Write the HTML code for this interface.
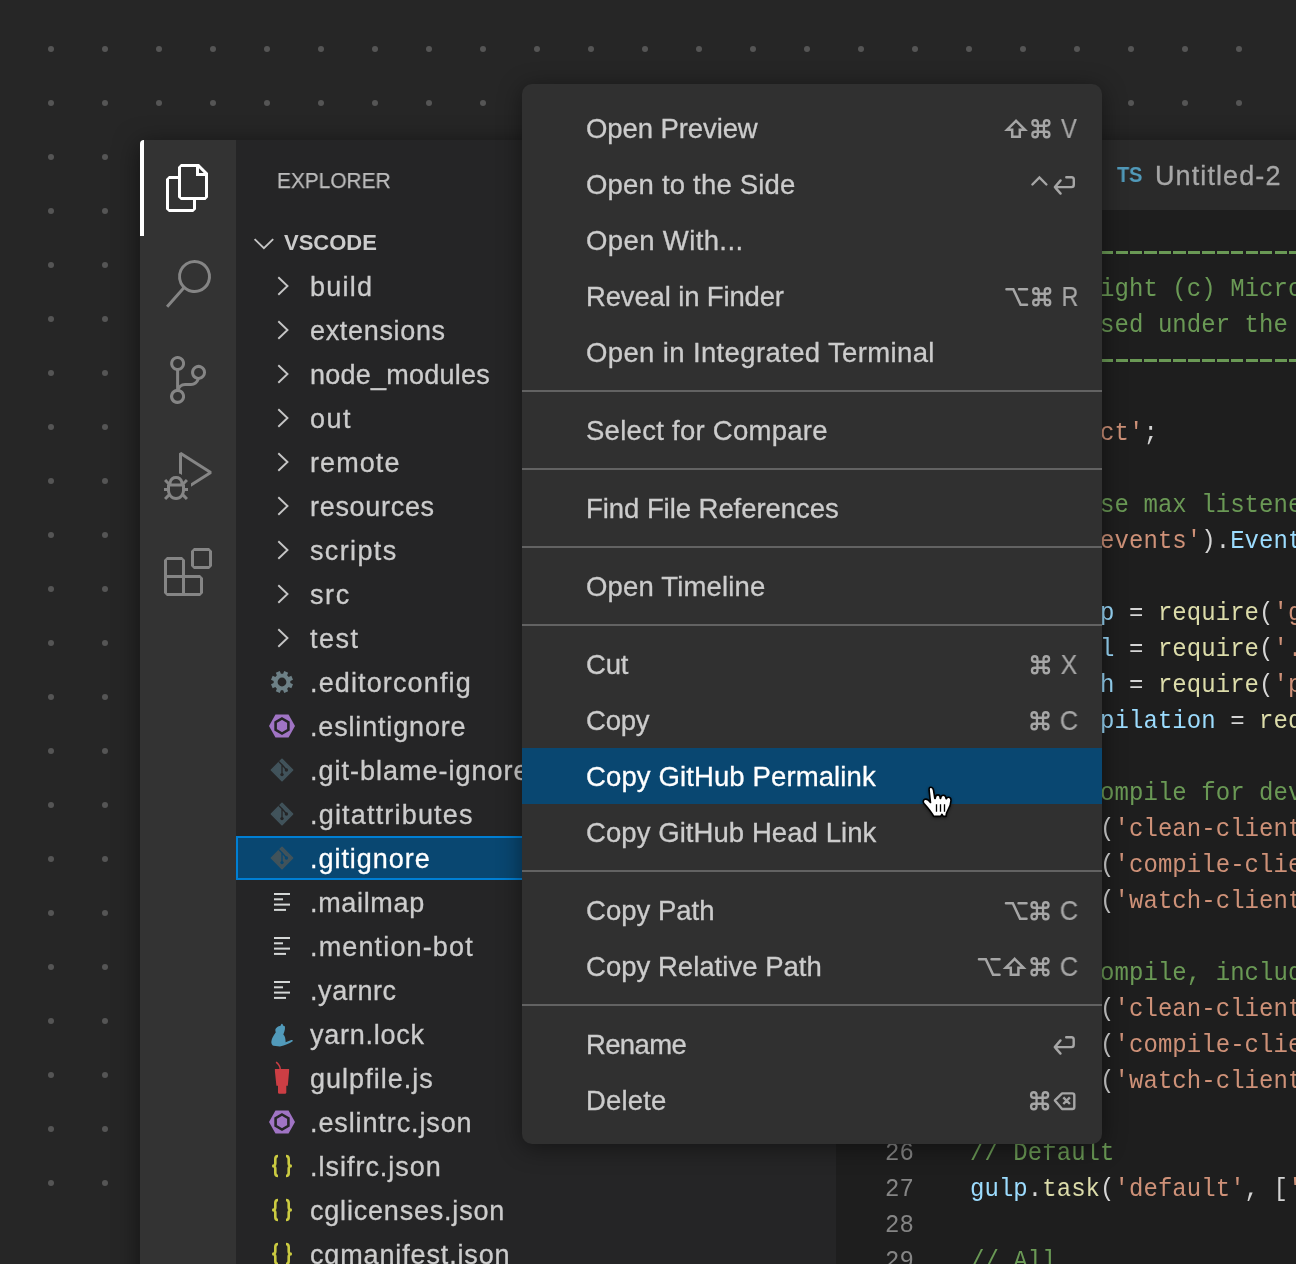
<!DOCTYPE html><html><head><meta charset="utf-8"><style>
*{margin:0;padding:0;box-sizing:border-box}
html,body{width:1296px;height:1264px;overflow:hidden;background:#262626}
body{position:relative;font-family:"Liberation Sans",sans-serif;}
.a{position:absolute}
.t{position:absolute;white-space:pre;line-height:1;will-change:transform}
.m{font-family:"Liberation Mono",monospace}
svg{position:absolute;overflow:visible}
.ex{font-size:27px;-webkit-text-stroke:0.3px currentColor}
.mi{font-size:27.5px;-webkit-text-stroke:0.3px currentColor}
.cl{font-size:24px;line-height:36px;letter-spacing:0.05px;transform-origin:0 24.4px;transform:scaleY(1.09)}
</style></head><body><svg class="a" style="left:0;top:0" width="1296" height="1264" fill="#555555"><circle cx="51" cy="49" r="3"/><circle cx="105" cy="49" r="3"/><circle cx="159" cy="49" r="3"/><circle cx="213" cy="49" r="3"/><circle cx="267" cy="49" r="3"/><circle cx="321" cy="49" r="3"/><circle cx="375" cy="49" r="3"/><circle cx="429" cy="49" r="3"/><circle cx="483" cy="49" r="3"/><circle cx="537" cy="49" r="3"/><circle cx="591" cy="49" r="3"/><circle cx="645" cy="49" r="3"/><circle cx="699" cy="49" r="3"/><circle cx="753" cy="49" r="3"/><circle cx="807" cy="49" r="3"/><circle cx="861" cy="49" r="3"/><circle cx="915" cy="49" r="3"/><circle cx="969" cy="49" r="3"/><circle cx="1023" cy="49" r="3"/><circle cx="1077" cy="49" r="3"/><circle cx="1131" cy="49" r="3"/><circle cx="1185" cy="49" r="3"/><circle cx="1239" cy="49" r="3"/><circle cx="51" cy="103" r="3"/><circle cx="105" cy="103" r="3"/><circle cx="159" cy="103" r="3"/><circle cx="213" cy="103" r="3"/><circle cx="267" cy="103" r="3"/><circle cx="321" cy="103" r="3"/><circle cx="375" cy="103" r="3"/><circle cx="429" cy="103" r="3"/><circle cx="483" cy="103" r="3"/><circle cx="537" cy="103" r="3"/><circle cx="591" cy="103" r="3"/><circle cx="645" cy="103" r="3"/><circle cx="699" cy="103" r="3"/><circle cx="753" cy="103" r="3"/><circle cx="807" cy="103" r="3"/><circle cx="861" cy="103" r="3"/><circle cx="915" cy="103" r="3"/><circle cx="969" cy="103" r="3"/><circle cx="1023" cy="103" r="3"/><circle cx="1077" cy="103" r="3"/><circle cx="1131" cy="103" r="3"/><circle cx="1185" cy="103" r="3"/><circle cx="1239" cy="103" r="3"/><circle cx="51" cy="157" r="3"/><circle cx="105" cy="157" r="3"/><circle cx="159" cy="157" r="3"/><circle cx="213" cy="157" r="3"/><circle cx="267" cy="157" r="3"/><circle cx="321" cy="157" r="3"/><circle cx="375" cy="157" r="3"/><circle cx="429" cy="157" r="3"/><circle cx="483" cy="157" r="3"/><circle cx="537" cy="157" r="3"/><circle cx="591" cy="157" r="3"/><circle cx="645" cy="157" r="3"/><circle cx="699" cy="157" r="3"/><circle cx="753" cy="157" r="3"/><circle cx="807" cy="157" r="3"/><circle cx="861" cy="157" r="3"/><circle cx="915" cy="157" r="3"/><circle cx="969" cy="157" r="3"/><circle cx="1023" cy="157" r="3"/><circle cx="1077" cy="157" r="3"/><circle cx="1131" cy="157" r="3"/><circle cx="1185" cy="157" r="3"/><circle cx="1239" cy="157" r="3"/><circle cx="51" cy="211" r="3"/><circle cx="105" cy="211" r="3"/><circle cx="159" cy="211" r="3"/><circle cx="213" cy="211" r="3"/><circle cx="267" cy="211" r="3"/><circle cx="321" cy="211" r="3"/><circle cx="375" cy="211" r="3"/><circle cx="429" cy="211" r="3"/><circle cx="483" cy="211" r="3"/><circle cx="537" cy="211" r="3"/><circle cx="591" cy="211" r="3"/><circle cx="645" cy="211" r="3"/><circle cx="699" cy="211" r="3"/><circle cx="753" cy="211" r="3"/><circle cx="807" cy="211" r="3"/><circle cx="861" cy="211" r="3"/><circle cx="915" cy="211" r="3"/><circle cx="969" cy="211" r="3"/><circle cx="1023" cy="211" r="3"/><circle cx="1077" cy="211" r="3"/><circle cx="1131" cy="211" r="3"/><circle cx="1185" cy="211" r="3"/><circle cx="1239" cy="211" r="3"/><circle cx="51" cy="265" r="3"/><circle cx="105" cy="265" r="3"/><circle cx="159" cy="265" r="3"/><circle cx="213" cy="265" r="3"/><circle cx="267" cy="265" r="3"/><circle cx="321" cy="265" r="3"/><circle cx="375" cy="265" r="3"/><circle cx="429" cy="265" r="3"/><circle cx="483" cy="265" r="3"/><circle cx="537" cy="265" r="3"/><circle cx="591" cy="265" r="3"/><circle cx="645" cy="265" r="3"/><circle cx="699" cy="265" r="3"/><circle cx="753" cy="265" r="3"/><circle cx="807" cy="265" r="3"/><circle cx="861" cy="265" r="3"/><circle cx="915" cy="265" r="3"/><circle cx="969" cy="265" r="3"/><circle cx="1023" cy="265" r="3"/><circle cx="1077" cy="265" r="3"/><circle cx="1131" cy="265" r="3"/><circle cx="1185" cy="265" r="3"/><circle cx="1239" cy="265" r="3"/><circle cx="51" cy="319" r="3"/><circle cx="105" cy="319" r="3"/><circle cx="159" cy="319" r="3"/><circle cx="213" cy="319" r="3"/><circle cx="267" cy="319" r="3"/><circle cx="321" cy="319" r="3"/><circle cx="375" cy="319" r="3"/><circle cx="429" cy="319" r="3"/><circle cx="483" cy="319" r="3"/><circle cx="537" cy="319" r="3"/><circle cx="591" cy="319" r="3"/><circle cx="645" cy="319" r="3"/><circle cx="699" cy="319" r="3"/><circle cx="753" cy="319" r="3"/><circle cx="807" cy="319" r="3"/><circle cx="861" cy="319" r="3"/><circle cx="915" cy="319" r="3"/><circle cx="969" cy="319" r="3"/><circle cx="1023" cy="319" r="3"/><circle cx="1077" cy="319" r="3"/><circle cx="1131" cy="319" r="3"/><circle cx="1185" cy="319" r="3"/><circle cx="1239" cy="319" r="3"/><circle cx="51" cy="373" r="3"/><circle cx="105" cy="373" r="3"/><circle cx="159" cy="373" r="3"/><circle cx="213" cy="373" r="3"/><circle cx="267" cy="373" r="3"/><circle cx="321" cy="373" r="3"/><circle cx="375" cy="373" r="3"/><circle cx="429" cy="373" r="3"/><circle cx="483" cy="373" r="3"/><circle cx="537" cy="373" r="3"/><circle cx="591" cy="373" r="3"/><circle cx="645" cy="373" r="3"/><circle cx="699" cy="373" r="3"/><circle cx="753" cy="373" r="3"/><circle cx="807" cy="373" r="3"/><circle cx="861" cy="373" r="3"/><circle cx="915" cy="373" r="3"/><circle cx="969" cy="373" r="3"/><circle cx="1023" cy="373" r="3"/><circle cx="1077" cy="373" r="3"/><circle cx="1131" cy="373" r="3"/><circle cx="1185" cy="373" r="3"/><circle cx="1239" cy="373" r="3"/><circle cx="51" cy="427" r="3"/><circle cx="105" cy="427" r="3"/><circle cx="159" cy="427" r="3"/><circle cx="213" cy="427" r="3"/><circle cx="267" cy="427" r="3"/><circle cx="321" cy="427" r="3"/><circle cx="375" cy="427" r="3"/><circle cx="429" cy="427" r="3"/><circle cx="483" cy="427" r="3"/><circle cx="537" cy="427" r="3"/><circle cx="591" cy="427" r="3"/><circle cx="645" cy="427" r="3"/><circle cx="699" cy="427" r="3"/><circle cx="753" cy="427" r="3"/><circle cx="807" cy="427" r="3"/><circle cx="861" cy="427" r="3"/><circle cx="915" cy="427" r="3"/><circle cx="969" cy="427" r="3"/><circle cx="1023" cy="427" r="3"/><circle cx="1077" cy="427" r="3"/><circle cx="1131" cy="427" r="3"/><circle cx="1185" cy="427" r="3"/><circle cx="1239" cy="427" r="3"/><circle cx="51" cy="481" r="3"/><circle cx="105" cy="481" r="3"/><circle cx="159" cy="481" r="3"/><circle cx="213" cy="481" r="3"/><circle cx="267" cy="481" r="3"/><circle cx="321" cy="481" r="3"/><circle cx="375" cy="481" r="3"/><circle cx="429" cy="481" r="3"/><circle cx="483" cy="481" r="3"/><circle cx="537" cy="481" r="3"/><circle cx="591" cy="481" r="3"/><circle cx="645" cy="481" r="3"/><circle cx="699" cy="481" r="3"/><circle cx="753" cy="481" r="3"/><circle cx="807" cy="481" r="3"/><circle cx="861" cy="481" r="3"/><circle cx="915" cy="481" r="3"/><circle cx="969" cy="481" r="3"/><circle cx="1023" cy="481" r="3"/><circle cx="1077" cy="481" r="3"/><circle cx="1131" cy="481" r="3"/><circle cx="1185" cy="481" r="3"/><circle cx="1239" cy="481" r="3"/><circle cx="51" cy="535" r="3"/><circle cx="105" cy="535" r="3"/><circle cx="159" cy="535" r="3"/><circle cx="213" cy="535" r="3"/><circle cx="267" cy="535" r="3"/><circle cx="321" cy="535" r="3"/><circle cx="375" cy="535" r="3"/><circle cx="429" cy="535" r="3"/><circle cx="483" cy="535" r="3"/><circle cx="537" cy="535" r="3"/><circle cx="591" cy="535" r="3"/><circle cx="645" cy="535" r="3"/><circle cx="699" cy="535" r="3"/><circle cx="753" cy="535" r="3"/><circle cx="807" cy="535" r="3"/><circle cx="861" cy="535" r="3"/><circle cx="915" cy="535" r="3"/><circle cx="969" cy="535" r="3"/><circle cx="1023" cy="535" r="3"/><circle cx="1077" cy="535" r="3"/><circle cx="1131" cy="535" r="3"/><circle cx="1185" cy="535" r="3"/><circle cx="1239" cy="535" r="3"/><circle cx="51" cy="589" r="3"/><circle cx="105" cy="589" r="3"/><circle cx="159" cy="589" r="3"/><circle cx="213" cy="589" r="3"/><circle cx="267" cy="589" r="3"/><circle cx="321" cy="589" r="3"/><circle cx="375" cy="589" r="3"/><circle cx="429" cy="589" r="3"/><circle cx="483" cy="589" r="3"/><circle cx="537" cy="589" r="3"/><circle cx="591" cy="589" r="3"/><circle cx="645" cy="589" r="3"/><circle cx="699" cy="589" r="3"/><circle cx="753" cy="589" r="3"/><circle cx="807" cy="589" r="3"/><circle cx="861" cy="589" r="3"/><circle cx="915" cy="589" r="3"/><circle cx="969" cy="589" r="3"/><circle cx="1023" cy="589" r="3"/><circle cx="1077" cy="589" r="3"/><circle cx="1131" cy="589" r="3"/><circle cx="1185" cy="589" r="3"/><circle cx="1239" cy="589" r="3"/><circle cx="51" cy="643" r="3"/><circle cx="105" cy="643" r="3"/><circle cx="159" cy="643" r="3"/><circle cx="213" cy="643" r="3"/><circle cx="267" cy="643" r="3"/><circle cx="321" cy="643" r="3"/><circle cx="375" cy="643" r="3"/><circle cx="429" cy="643" r="3"/><circle cx="483" cy="643" r="3"/><circle cx="537" cy="643" r="3"/><circle cx="591" cy="643" r="3"/><circle cx="645" cy="643" r="3"/><circle cx="699" cy="643" r="3"/><circle cx="753" cy="643" r="3"/><circle cx="807" cy="643" r="3"/><circle cx="861" cy="643" r="3"/><circle cx="915" cy="643" r="3"/><circle cx="969" cy="643" r="3"/><circle cx="1023" cy="643" r="3"/><circle cx="1077" cy="643" r="3"/><circle cx="1131" cy="643" r="3"/><circle cx="1185" cy="643" r="3"/><circle cx="1239" cy="643" r="3"/><circle cx="51" cy="697" r="3"/><circle cx="105" cy="697" r="3"/><circle cx="159" cy="697" r="3"/><circle cx="213" cy="697" r="3"/><circle cx="267" cy="697" r="3"/><circle cx="321" cy="697" r="3"/><circle cx="375" cy="697" r="3"/><circle cx="429" cy="697" r="3"/><circle cx="483" cy="697" r="3"/><circle cx="537" cy="697" r="3"/><circle cx="591" cy="697" r="3"/><circle cx="645" cy="697" r="3"/><circle cx="699" cy="697" r="3"/><circle cx="753" cy="697" r="3"/><circle cx="807" cy="697" r="3"/><circle cx="861" cy="697" r="3"/><circle cx="915" cy="697" r="3"/><circle cx="969" cy="697" r="3"/><circle cx="1023" cy="697" r="3"/><circle cx="1077" cy="697" r="3"/><circle cx="1131" cy="697" r="3"/><circle cx="1185" cy="697" r="3"/><circle cx="1239" cy="697" r="3"/><circle cx="51" cy="751" r="3"/><circle cx="105" cy="751" r="3"/><circle cx="159" cy="751" r="3"/><circle cx="213" cy="751" r="3"/><circle cx="267" cy="751" r="3"/><circle cx="321" cy="751" r="3"/><circle cx="375" cy="751" r="3"/><circle cx="429" cy="751" r="3"/><circle cx="483" cy="751" r="3"/><circle cx="537" cy="751" r="3"/><circle cx="591" cy="751" r="3"/><circle cx="645" cy="751" r="3"/><circle cx="699" cy="751" r="3"/><circle cx="753" cy="751" r="3"/><circle cx="807" cy="751" r="3"/><circle cx="861" cy="751" r="3"/><circle cx="915" cy="751" r="3"/><circle cx="969" cy="751" r="3"/><circle cx="1023" cy="751" r="3"/><circle cx="1077" cy="751" r="3"/><circle cx="1131" cy="751" r="3"/><circle cx="1185" cy="751" r="3"/><circle cx="1239" cy="751" r="3"/><circle cx="51" cy="805" r="3"/><circle cx="105" cy="805" r="3"/><circle cx="159" cy="805" r="3"/><circle cx="213" cy="805" r="3"/><circle cx="267" cy="805" r="3"/><circle cx="321" cy="805" r="3"/><circle cx="375" cy="805" r="3"/><circle cx="429" cy="805" r="3"/><circle cx="483" cy="805" r="3"/><circle cx="537" cy="805" r="3"/><circle cx="591" cy="805" r="3"/><circle cx="645" cy="805" r="3"/><circle cx="699" cy="805" r="3"/><circle cx="753" cy="805" r="3"/><circle cx="807" cy="805" r="3"/><circle cx="861" cy="805" r="3"/><circle cx="915" cy="805" r="3"/><circle cx="969" cy="805" r="3"/><circle cx="1023" cy="805" r="3"/><circle cx="1077" cy="805" r="3"/><circle cx="1131" cy="805" r="3"/><circle cx="1185" cy="805" r="3"/><circle cx="1239" cy="805" r="3"/><circle cx="51" cy="859" r="3"/><circle cx="105" cy="859" r="3"/><circle cx="159" cy="859" r="3"/><circle cx="213" cy="859" r="3"/><circle cx="267" cy="859" r="3"/><circle cx="321" cy="859" r="3"/><circle cx="375" cy="859" r="3"/><circle cx="429" cy="859" r="3"/><circle cx="483" cy="859" r="3"/><circle cx="537" cy="859" r="3"/><circle cx="591" cy="859" r="3"/><circle cx="645" cy="859" r="3"/><circle cx="699" cy="859" r="3"/><circle cx="753" cy="859" r="3"/><circle cx="807" cy="859" r="3"/><circle cx="861" cy="859" r="3"/><circle cx="915" cy="859" r="3"/><circle cx="969" cy="859" r="3"/><circle cx="1023" cy="859" r="3"/><circle cx="1077" cy="859" r="3"/><circle cx="1131" cy="859" r="3"/><circle cx="1185" cy="859" r="3"/><circle cx="1239" cy="859" r="3"/><circle cx="51" cy="913" r="3"/><circle cx="105" cy="913" r="3"/><circle cx="159" cy="913" r="3"/><circle cx="213" cy="913" r="3"/><circle cx="267" cy="913" r="3"/><circle cx="321" cy="913" r="3"/><circle cx="375" cy="913" r="3"/><circle cx="429" cy="913" r="3"/><circle cx="483" cy="913" r="3"/><circle cx="537" cy="913" r="3"/><circle cx="591" cy="913" r="3"/><circle cx="645" cy="913" r="3"/><circle cx="699" cy="913" r="3"/><circle cx="753" cy="913" r="3"/><circle cx="807" cy="913" r="3"/><circle cx="861" cy="913" r="3"/><circle cx="915" cy="913" r="3"/><circle cx="969" cy="913" r="3"/><circle cx="1023" cy="913" r="3"/><circle cx="1077" cy="913" r="3"/><circle cx="1131" cy="913" r="3"/><circle cx="1185" cy="913" r="3"/><circle cx="1239" cy="913" r="3"/><circle cx="51" cy="967" r="3"/><circle cx="105" cy="967" r="3"/><circle cx="159" cy="967" r="3"/><circle cx="213" cy="967" r="3"/><circle cx="267" cy="967" r="3"/><circle cx="321" cy="967" r="3"/><circle cx="375" cy="967" r="3"/><circle cx="429" cy="967" r="3"/><circle cx="483" cy="967" r="3"/><circle cx="537" cy="967" r="3"/><circle cx="591" cy="967" r="3"/><circle cx="645" cy="967" r="3"/><circle cx="699" cy="967" r="3"/><circle cx="753" cy="967" r="3"/><circle cx="807" cy="967" r="3"/><circle cx="861" cy="967" r="3"/><circle cx="915" cy="967" r="3"/><circle cx="969" cy="967" r="3"/><circle cx="1023" cy="967" r="3"/><circle cx="1077" cy="967" r="3"/><circle cx="1131" cy="967" r="3"/><circle cx="1185" cy="967" r="3"/><circle cx="1239" cy="967" r="3"/><circle cx="51" cy="1021" r="3"/><circle cx="105" cy="1021" r="3"/><circle cx="159" cy="1021" r="3"/><circle cx="213" cy="1021" r="3"/><circle cx="267" cy="1021" r="3"/><circle cx="321" cy="1021" r="3"/><circle cx="375" cy="1021" r="3"/><circle cx="429" cy="1021" r="3"/><circle cx="483" cy="1021" r="3"/><circle cx="537" cy="1021" r="3"/><circle cx="591" cy="1021" r="3"/><circle cx="645" cy="1021" r="3"/><circle cx="699" cy="1021" r="3"/><circle cx="753" cy="1021" r="3"/><circle cx="807" cy="1021" r="3"/><circle cx="861" cy="1021" r="3"/><circle cx="915" cy="1021" r="3"/><circle cx="969" cy="1021" r="3"/><circle cx="1023" cy="1021" r="3"/><circle cx="1077" cy="1021" r="3"/><circle cx="1131" cy="1021" r="3"/><circle cx="1185" cy="1021" r="3"/><circle cx="1239" cy="1021" r="3"/><circle cx="51" cy="1075" r="3"/><circle cx="105" cy="1075" r="3"/><circle cx="159" cy="1075" r="3"/><circle cx="213" cy="1075" r="3"/><circle cx="267" cy="1075" r="3"/><circle cx="321" cy="1075" r="3"/><circle cx="375" cy="1075" r="3"/><circle cx="429" cy="1075" r="3"/><circle cx="483" cy="1075" r="3"/><circle cx="537" cy="1075" r="3"/><circle cx="591" cy="1075" r="3"/><circle cx="645" cy="1075" r="3"/><circle cx="699" cy="1075" r="3"/><circle cx="753" cy="1075" r="3"/><circle cx="807" cy="1075" r="3"/><circle cx="861" cy="1075" r="3"/><circle cx="915" cy="1075" r="3"/><circle cx="969" cy="1075" r="3"/><circle cx="1023" cy="1075" r="3"/><circle cx="1077" cy="1075" r="3"/><circle cx="1131" cy="1075" r="3"/><circle cx="1185" cy="1075" r="3"/><circle cx="1239" cy="1075" r="3"/><circle cx="51" cy="1129" r="3"/><circle cx="105" cy="1129" r="3"/><circle cx="159" cy="1129" r="3"/><circle cx="213" cy="1129" r="3"/><circle cx="267" cy="1129" r="3"/><circle cx="321" cy="1129" r="3"/><circle cx="375" cy="1129" r="3"/><circle cx="429" cy="1129" r="3"/><circle cx="483" cy="1129" r="3"/><circle cx="537" cy="1129" r="3"/><circle cx="591" cy="1129" r="3"/><circle cx="645" cy="1129" r="3"/><circle cx="699" cy="1129" r="3"/><circle cx="753" cy="1129" r="3"/><circle cx="807" cy="1129" r="3"/><circle cx="861" cy="1129" r="3"/><circle cx="915" cy="1129" r="3"/><circle cx="969" cy="1129" r="3"/><circle cx="1023" cy="1129" r="3"/><circle cx="1077" cy="1129" r="3"/><circle cx="1131" cy="1129" r="3"/><circle cx="1185" cy="1129" r="3"/><circle cx="1239" cy="1129" r="3"/><circle cx="51" cy="1183" r="3"/><circle cx="105" cy="1183" r="3"/><circle cx="159" cy="1183" r="3"/><circle cx="213" cy="1183" r="3"/><circle cx="267" cy="1183" r="3"/><circle cx="321" cy="1183" r="3"/><circle cx="375" cy="1183" r="3"/><circle cx="429" cy="1183" r="3"/><circle cx="483" cy="1183" r="3"/><circle cx="537" cy="1183" r="3"/><circle cx="591" cy="1183" r="3"/><circle cx="645" cy="1183" r="3"/><circle cx="699" cy="1183" r="3"/><circle cx="753" cy="1183" r="3"/><circle cx="807" cy="1183" r="3"/><circle cx="861" cy="1183" r="3"/><circle cx="915" cy="1183" r="3"/><circle cx="969" cy="1183" r="3"/><circle cx="1023" cy="1183" r="3"/><circle cx="1077" cy="1183" r="3"/><circle cx="1131" cy="1183" r="3"/><circle cx="1185" cy="1183" r="3"/><circle cx="1239" cy="1183" r="3"/></svg>
<div class="a" style="left:140px;top:140px;width:1200px;height:1200px;border-radius:4px;box-shadow:0 5px 24px 1px rgba(0,0,0,0.5);background:#1e1e1e;overflow:hidden">
<div class="a" style="left:0;top:0;width:96px;height:1200px;background:#333333"></div>
<div class="a" style="left:0;top:0;width:4px;height:96px;background:#ffffff"></div>
<div class="a" style="left:96px;top:0;width:600px;height:1200px;background:#252526"></div>
<div class="a" style="left:696px;top:0;width:600px;height:70px;background:#2a2a2a"></div>
</div>
<svg style="left:164px;top:164px" width="48" height="48" viewBox="0 0 24 24" fill="#ffffff"><path fill-rule="evenodd" clip-rule="evenodd" d="M17.5 0h-9L7 1.5V6H2.5L1 7.5v15.07L2.5 24h12.07L16 22.57V18h4.7l1.3-1.43V4.5L17.5 0zm0 2.12l2.38 2.38H17.5V2.12zm-3 20.38h-12v-15H7v9.07L8.5 18h6v4.5zm6-6h-12v-15H16V6h4.5v10.5z"/></svg>
<svg style="left:164px;top:260px" width="48" height="48" viewBox="0 0 24 24" fill="#858585"><path d="M15.25 0a8.25 8.25 0 0 0-6.18 13.72L1 22.88l1.12 1 8.05-9.12A8.251 8.251 0 1 0 15.25.01V0zm0 15a6.75 6.75 0 1 1 0-13.5 6.75 6.75 0 0 1 0 13.5z"/></svg>
<svg style="left:164px;top:356px" width="48" height="48" viewBox="0 0 24 24" fill="#858585"><path d="M21.007 8.222A3.738 3.738 0 0 0 15.045 5.2a3.737 3.737 0 0 0 1.156 6.583 2.988 2.988 0 0 1-2.668 1.67h-2.99a4.456 4.456 0 0 0-2.989 1.165V7.4a3.737 3.737 0 1 0-1.494 0v9.117a3.776 3.776 0 1 0 1.816.099 2.99 2.99 0 0 1 2.668-1.667h2.99a4.484 4.484 0 0 0 4.223-3.039 3.736 3.736 0 0 0 3.25-3.687zM4.565 3.738a2.242 2.242 0 1 1 4.484 0 2.242 2.242 0 0 1-4.484 0zm4.484 16.441a2.242 2.242 0 1 1-4.484 0 2.242 2.242 0 0 1 4.484 0zm8.221-9.715a2.242 2.242 0 1 1 0-4.485 2.242 2.242 0 0 1 0 4.485z"/></svg>
<svg style="left:164px;top:452px" width="48" height="48" viewBox="0 0 24 24" fill="#858585"><path d="M10.94 13.5l-1.32 1.32a3.73 3.73 0 0 0-7.24 0L1.06 13.5 0 14.56l1.72 1.72-.22.22V18H0v1.5h1.5v.08c.077.489.214.966.41 1.42L0 22.94 1.06 24l1.65-1.65A4.308 4.308 0 0 0 6 24a4.31 4.31 0 0 0 3.29-1.65L10.94 24 12 22.94 10.09 21c.198-.464.336-.951.41-1.45v-.1H12V18h-1.5v-1.5l-.22-.22L12 14.56l-1.06-1.06zM6 13.5a2.25 2.25 0 0 1 2.25 2.25h-4.5A2.25 2.25 0 0 1 6 13.5zm3 6a3.33 3.33 0 0 1-3 3 3.33 3.33 0 0 1-3-3v-2.25h6v2.25zm14.76-9.9v1.26L13.5 17.37V15.6l8.5-5.37L9 2v9.46a5.07 5.07 0 0 0-1.5-.72V.63L8.64 0l15.12 9.6z"/></svg>
<svg style="left:164px;top:548px" width="48" height="48" viewBox="0 0 24 24" fill="#858585"><path d="M13.5 1.5L15 0h7.5L24 1.5V9l-1.5 1.5H15L13.5 9V1.5zm1.5 0V9h7.5V1.5H15zM0 15V6l1.5-1.5H9L10.5 6v7.5H18l1.5 1.5v7.5L18 24H1.5L0 22.5V15zm9-1.5V6H1.5v7.5H9zM9 15H1.5v7.5H9V15zm1.5 7.5H18V15h-7.5v7.5z"/></svg>
<div class="t" style="left:277px;top:169.5px;font-size:22px;transform-origin:0 0;transform:scaleX(0.948);-webkit-text-stroke:0.25px #bbbbbb;color:#bbbbbb">EXPLORER</div>
<svg style="left:248px;top:228px" width="32" height="30" viewBox="0 0 32 30"><path d="M6.6 11.1 L15.9 20.2 L25.2 11.1" stroke="#c5c5c5" stroke-width="1.9" fill="none"/></svg>
<div class="t" style="left:284px;top:231.5px;font-size:22px;font-weight:bold;color:#cccccc">VSCODE</div>
<svg style="left:270px;top:274px" width="24" height="24" viewBox="0 0 24 24"><path d="M8.3 3.2 L17.5 12 L8.3 20.8" stroke="#c5c5c5" stroke-width="1.9" fill="none"/></svg>
<div class="t ex" style="left:309.7px;top:274px;color:#cccccc;letter-spacing:1.250px">build</div>
<svg style="left:270px;top:318px" width="24" height="24" viewBox="0 0 24 24"><path d="M8.3 3.2 L17.5 12 L8.3 20.8" stroke="#c5c5c5" stroke-width="1.9" fill="none"/></svg>
<div class="t ex" style="left:309.7px;top:318px;color:#cccccc;letter-spacing:0.667px">extensions</div>
<svg style="left:270px;top:362px" width="24" height="24" viewBox="0 0 24 24"><path d="M8.3 3.2 L17.5 12 L8.3 20.8" stroke="#c5c5c5" stroke-width="1.9" fill="none"/></svg>
<div class="t ex" style="left:309.7px;top:362px;color:#cccccc;letter-spacing:0.239px">node_modules</div>
<svg style="left:270px;top:406px" width="24" height="24" viewBox="0 0 24 24"><path d="M8.3 3.2 L17.5 12 L8.3 20.8" stroke="#c5c5c5" stroke-width="1.9" fill="none"/></svg>
<div class="t ex" style="left:309.7px;top:406px;color:#cccccc;letter-spacing:1.500px">out</div>
<svg style="left:270px;top:450px" width="24" height="24" viewBox="0 0 24 24"><path d="M8.3 3.2 L17.5 12 L8.3 20.8" stroke="#c5c5c5" stroke-width="1.9" fill="none"/></svg>
<div class="t ex" style="left:309.7px;top:450px;color:#cccccc;letter-spacing:1.080px">remote</div>
<svg style="left:270px;top:494px" width="24" height="24" viewBox="0 0 24 24"><path d="M8.3 3.2 L17.5 12 L8.3 20.8" stroke="#c5c5c5" stroke-width="1.9" fill="none"/></svg>
<div class="t ex" style="left:309.7px;top:494px;color:#cccccc;letter-spacing:0.696px">resources</div>
<svg style="left:270px;top:538px" width="24" height="24" viewBox="0 0 24 24"><path d="M8.3 3.2 L17.5 12 L8.3 20.8" stroke="#c5c5c5" stroke-width="1.9" fill="none"/></svg>
<div class="t ex" style="left:309.7px;top:538px;color:#cccccc;letter-spacing:1.369px">scripts</div>
<svg style="left:270px;top:582px" width="24" height="24" viewBox="0 0 24 24"><path d="M8.3 3.2 L17.5 12 L8.3 20.8" stroke="#c5c5c5" stroke-width="1.9" fill="none"/></svg>
<div class="t ex" style="left:309.7px;top:582px;color:#cccccc;letter-spacing:1.600px">src</div>
<svg style="left:270px;top:626px" width="24" height="24" viewBox="0 0 24 24"><path d="M8.3 3.2 L17.5 12 L8.3 20.8" stroke="#c5c5c5" stroke-width="1.9" fill="none"/></svg>
<div class="t ex" style="left:309.7px;top:626px;color:#cccccc;letter-spacing:1.466px">test</div>
<svg style="left:270px;top:670px" width="24" height="24" viewBox="0 0 24 24" fill="#6d8086"><path fill-rule="evenodd" d="M13.10 3.67 L14.23 1.02 L18.18 2.66 L17.11 5.34 L18.66 6.89 L21.34 5.82 L22.98 9.77 L20.33 10.90 L20.33 13.10 L22.98 14.23 L21.34 18.18 L18.66 17.11 L17.11 18.66 L18.18 21.34 L14.23 22.98 L13.10 20.33 L10.90 20.33 L9.77 22.98 L5.82 21.34 L6.89 18.66 L5.34 17.11 L2.66 18.18 L1.02 14.23 L3.67 13.10 L3.67 10.90 L1.02 9.77 L2.66 5.82 L5.34 6.89 L6.89 5.34 L5.82 2.66 L9.77 1.02 L10.90 3.67Z M12 7.6a4.4 4.4 0 1 0 0 8.8 4.4 4.4 0 0 0 0-8.8z"/></svg>
<div class="t ex" style="left:309.7px;top:670px;color:#cccccc;letter-spacing:1.135px">.editorconfig</div>
<svg style="left:268px;top:714px" width="28" height="24" viewBox="0 0 28 24"><path fill="#a074c4" d="M1 12 L7.5 0.6 H20.5 L27 12 L20.5 23.4 H7.5Z"/><path fill="none" stroke="#252526" stroke-width="2.6" d="M14 4.5 L20.4 8.25 V15.75 L14 19.5 L7.6 15.75 V8.25Z"/></svg>
<div class="t ex" style="left:309.7px;top:714px;color:#cccccc;letter-spacing:0.833px">.eslintignore</div>
<svg style="left:270px;top:758px" width="24" height="24" viewBox="0 0 24 24"><path fill="#41535b" stroke="#41535b" stroke-width="1.6" stroke-linejoin="round" d="M12 1.4 L22.6 12 L12 22.6 L1.4 12Z"/><path stroke="#252526" stroke-width="1.3" fill="none" d="M8.6 3.4 L12 6.8 V16.5 M12 6.8 L16.4 11.8"/><circle cx="12" cy="16.6" r="1.7" fill="#252526"/><circle cx="16.4" cy="12" r="1.7" fill="#252526"/></svg>
<div class="t ex" style="left:309.7px;top:758px;color:#cccccc;letter-spacing:1.000px">.git-blame-ignore-revs</div>
<svg style="left:270px;top:802px" width="24" height="24" viewBox="0 0 24 24"><path fill="#41535b" stroke="#41535b" stroke-width="1.6" stroke-linejoin="round" d="M12 1.4 L22.6 12 L12 22.6 L1.4 12Z"/><path stroke="#252526" stroke-width="1.3" fill="none" d="M8.6 3.4 L12 6.8 V16.5 M12 6.8 L16.4 11.8"/><circle cx="12" cy="16.6" r="1.7" fill="#252526"/><circle cx="16.4" cy="12" r="1.7" fill="#252526"/></svg>
<div class="t ex" style="left:309.7px;top:802px;color:#cccccc;letter-spacing:1.184px">.gitattributes</div>
<div class="a" style="left:236px;top:836px;width:600px;height:44px;background:#094771;border:2px solid #007fd4"></div>
<svg style="left:270px;top:846px" width="24" height="24" viewBox="0 0 24 24"><path fill="#41535b" stroke="#41535b" stroke-width="1.6" stroke-linejoin="round" d="M12 1.4 L22.6 12 L12 22.6 L1.4 12Z"/><path stroke="#094771" stroke-width="1.3" fill="none" d="M8.6 3.4 L12 6.8 V16.5 M12 6.8 L16.4 11.8"/><circle cx="12" cy="16.6" r="1.7" fill="#094771"/><circle cx="16.4" cy="12" r="1.7" fill="#094771"/></svg>
<div class="t ex" style="left:309.7px;top:846px;color:#ffffff;letter-spacing:0.954px">.gitignore</div>
<svg style="left:270px;top:889px" width="24" height="24" viewBox="0 0 24 24" fill="#d4d7d6"><rect x="4" y="4" width="16" height="2"/><rect x="4" y="9.3" width="9" height="2"/><rect x="4" y="14.6" width="16" height="2"/><rect x="4" y="19.9" width="12" height="2"/></svg>
<div class="t ex" style="left:309.7px;top:890px;color:#cccccc;letter-spacing:0.659px">.mailmap</div>
<svg style="left:270px;top:933px" width="24" height="24" viewBox="0 0 24 24" fill="#d4d7d6"><rect x="4" y="4" width="16" height="2"/><rect x="4" y="9.3" width="9" height="2"/><rect x="4" y="14.6" width="16" height="2"/><rect x="4" y="19.9" width="12" height="2"/></svg>
<div class="t ex" style="left:309.7px;top:934px;color:#cccccc;letter-spacing:1.144px">.mention-bot</div>
<svg style="left:270px;top:977px" width="24" height="24" viewBox="0 0 24 24" fill="#d4d7d6"><rect x="4" y="4" width="16" height="2"/><rect x="4" y="9.3" width="9" height="2"/><rect x="4" y="14.6" width="16" height="2"/><rect x="4" y="19.9" width="12" height="2"/></svg>
<div class="t ex" style="left:309.7px;top:978px;color:#cccccc;letter-spacing:0.600px">.yarnrc</div>
<svg style="left:266px;top:1018px" width="32" height="32" viewBox="0 0 32 32" fill="#519aba"><path d="M15.9 5.8 C16.8 5.8 17 7 17 7.6 L18.8 8.2 C19.3 10 19 12.5 17.3 16.5 C19 18 19.6 20.5 19.6 24.2 L25.3 22 C26.8 21.5 27.4 22.8 26.2 23.6 C23.5 25.3 19 27.8 14 28.4 L7.5 27.8 C6 27.5 5 25 5.4 23.3 C5.8 20.5 7 18 9.8 14.2 C9 12.5 9.2 10.5 10.8 9.5 C12 8.5 13.5 8 14.8 7.5 C15 6.5 15.3 5.8 15.9 5.8Z"/></svg>
<div class="t ex" style="left:309.7px;top:1022px;color:#cccccc;letter-spacing:0.750px">yarn.lock</div>
<svg style="left:266px;top:1058px" width="32" height="40" viewBox="0 0 32 40" fill="#cc3e44"><path d="M10.1 4.1 C12 5.5 14 7.5 14.2 11" stroke="#cc3e44" stroke-width="1.4" fill="none"/><path d="M8.9 11.1 H23.1 V13.3 L21.8 27.8 H20.3 V34.5 C20.3 35.5 19.5 35.8 18.5 35.8 H13.8 C12.8 35.8 12 35.5 12 34.5 V27.8 H10.4 L8.9 13.3Z"/></svg>
<div class="t ex" style="left:309.7px;top:1066px;color:#cccccc;letter-spacing:1.020px">gulpfile.js</div>
<svg style="left:268px;top:1110px" width="28" height="24" viewBox="0 0 28 24"><path fill="#a074c4" d="M1 12 L7.5 0.6 H20.5 L27 12 L20.5 23.4 H7.5Z"/><path fill="none" stroke="#252526" stroke-width="2.6" d="M14 4.5 L20.4 8.25 V15.75 L14 19.5 L7.6 15.75 V8.25Z"/></svg>
<div class="t ex" style="left:309.7px;top:1110px;color:#cccccc;letter-spacing:0.890px">.eslintrc.json</div>
<svg style="left:266px;top:1152px" width="32" height="28" viewBox="0 0 32 28"><path fill="none" stroke="#cbcb41" stroke-width="2.6" d="M12 4 C10 4 9.3 5 9.3 7 V11.5 C9.3 13.2 8.5 14 6.1 14 C8.5 14 9.3 14.8 9.3 16.5 V21 C9.3 23 10 24 12 24 M20 4 C22 4 22.7 5 22.7 7 V11.5 C22.7 13.2 23.5 14 25.9 14 C23.5 14 22.7 14.8 22.7 16.5 V21 C22.7 23 22 24 20 24"/></svg>
<div class="t ex" style="left:309.7px;top:1154px;color:#cccccc;letter-spacing:0.981px">.lsifrc.json</div>
<svg style="left:266px;top:1196px" width="32" height="28" viewBox="0 0 32 28"><path fill="none" stroke="#cbcb41" stroke-width="2.6" d="M12 4 C10 4 9.3 5 9.3 7 V11.5 C9.3 13.2 8.5 14 6.1 14 C8.5 14 9.3 14.8 9.3 16.5 V21 C9.3 23 10 24 12 24 M20 4 C22 4 22.7 5 22.7 7 V11.5 C22.7 13.2 23.5 14 25.9 14 C23.5 14 22.7 14.8 22.7 16.5 V21 C22.7 23 22 24 20 24"/></svg>
<div class="t ex" style="left:309.7px;top:1198px;color:#cccccc;letter-spacing:0.801px">cglicenses.json</div>
<svg style="left:266px;top:1240px" width="32" height="28" viewBox="0 0 32 28"><path fill="none" stroke="#cbcb41" stroke-width="2.6" d="M12 4 C10 4 9.3 5 9.3 7 V11.5 C9.3 13.2 8.5 14 6.1 14 C8.5 14 9.3 14.8 9.3 16.5 V21 C9.3 23 10 24 12 24 M20 4 C22 4 22.7 5 22.7 7 V11.5 C22.7 13.2 23.5 14 25.9 14 C23.5 14 22.7 14.8 22.7 16.5 V21 C22.7 23 22 24 20 24"/></svg>
<div class="t ex" style="left:309.7px;top:1242px;color:#cccccc;letter-spacing:0.857px">cgmanifest.json</div>
<div class="t" style="left:1117px;top:163.7px;font-size:22.5px;font-weight:bold;letter-spacing:-0.3px;transform-origin:0 0;transform:scaleX(0.89);color:#519aba">TS</div>
<div class="t" style="left:1155px;top:163px;font-size:27px;letter-spacing:1.1px;-webkit-text-stroke:0.3px #a6a6a6;color:#a6a6a6">Untitled-2</div>
<div class="a" style="left:1000.1px;top:251.1px;width:317.9px;height:2.7px;background:repeating-linear-gradient(90deg,#6a9955 0 12.3px,transparent 12.3px 14.45px)"></div>
<div class="a" style="left:1000.1px;top:359.1px;width:317.9px;height:2.7px;background:repeating-linear-gradient(90deg,#6a9955 0 12.3px,transparent 12.3px 14.45px)"></div>
<div class="t m cl" style="left:970px;top:235.6px"><span style="color:#6a9955">/*</span></div>
<div class="t m cl" style="left:970px;top:271.6px"><span style="color:#6a9955"> *  Copyright (c) Microsoft Corporation. All rights reserved.</span></div>
<div class="t m cl" style="left:970px;top:307.6px"><span style="color:#6a9955"> *  Licensed under the MIT License. See License.txt in the project root for license information.</span></div>
<div class="t m cl" style="left:970px;top:343.6px"><span style="color:#6a9955"> *</span></div>
<div class="t m cl" style="left:970px;top:415.6px"><span style="color:#ce9178">&#x27;use strict&#x27;</span><span style="color:#d4d4d4">;</span></div>
<div class="t m cl" style="left:970px;top:487.6px"><span style="color:#6a9955">// Increase max listeners for event emitters</span></div>
<div class="t m cl" style="left:970px;top:523.6px"><span style="color:#dcdcaa">require</span><span style="color:#d4d4d4">(</span><span style="color:#ce9178">&#x27;events&#x27;</span><span style="color:#d4d4d4">).</span><span style="color:#9cdcfe">EventEmitter</span><span style="color:#d4d4d4">.</span><span style="color:#9cdcfe">defaultMaxListeners</span><span style="color:#d4d4d4"> = </span><span style="color:#b5cea8">100</span><span style="color:#d4d4d4">;</span></div>
<div class="t m cl" style="left:970px;top:595.6px"><span style="color:#569cd6">const </span><span style="color:#9cdcfe">gulp</span><span style="color:#d4d4d4"> = </span><span style="color:#dcdcaa">require</span><span style="color:#d4d4d4">(</span><span style="color:#ce9178">&#x27;gulp&#x27;</span><span style="color:#d4d4d4">);</span></div>
<div class="t m cl" style="left:970px;top:631.6px"><span style="color:#569cd6">const </span><span style="color:#9cdcfe">util</span><span style="color:#d4d4d4"> = </span><span style="color:#dcdcaa">require</span><span style="color:#d4d4d4">(</span><span style="color:#ce9178">&#x27;./build/lib/util&#x27;</span><span style="color:#d4d4d4">);</span></div>
<div class="t m cl" style="left:970px;top:667.6px"><span style="color:#569cd6">const </span><span style="color:#9cdcfe">path</span><span style="color:#d4d4d4"> = </span><span style="color:#dcdcaa">require</span><span style="color:#d4d4d4">(</span><span style="color:#ce9178">&#x27;path&#x27;</span><span style="color:#d4d4d4">);</span></div>
<div class="t m cl" style="left:970px;top:703.6px"><span style="color:#569cd6">const </span><span style="color:#9cdcfe">compilation</span><span style="color:#d4d4d4"> = </span><span style="color:#dcdcaa">require</span><span style="color:#d4d4d4">(</span><span style="color:#ce9178">&#x27;./build/lib/compilation&#x27;</span><span style="color:#d4d4d4">);</span></div>
<div class="t m cl" style="left:970px;top:775.6px"><span style="color:#6a9955">// Fast compile for development time</span></div>
<div class="t m cl" style="left:970px;top:811.6px"><span style="color:#9cdcfe">gulp</span><span style="color:#d4d4d4">.</span><span style="color:#dcdcaa">task</span><span style="color:#d4d4d4">(</span><span style="color:#ce9178">&#x27;clean-client&#x27;</span><span style="color:#d4d4d4">, </span><span style="color:#9cdcfe">util</span><span style="color:#d4d4d4">.</span></div>
<div class="t m cl" style="left:970px;top:847.6px"><span style="color:#9cdcfe">gulp</span><span style="color:#d4d4d4">.</span><span style="color:#dcdcaa">task</span><span style="color:#d4d4d4">(</span><span style="color:#ce9178">&#x27;compile-client&#x27;</span><span style="color:#d4d4d4">, [</span></div>
<div class="t m cl" style="left:970px;top:883.6px"><span style="color:#9cdcfe">gulp</span><span style="color:#d4d4d4">.</span><span style="color:#dcdcaa">task</span><span style="color:#d4d4d4">(</span><span style="color:#ce9178">&#x27;watch-client&#x27;</span><span style="color:#d4d4d4">, [</span></div>
<div class="t m cl" style="left:970px;top:955.6px"><span style="color:#6a9955">// Full compile, including nls and inline sources in sourcemaps, for build</span></div>
<div class="t m cl" style="left:970px;top:991.6px"><span style="color:#9cdcfe">gulp</span><span style="color:#d4d4d4">.</span><span style="color:#dcdcaa">task</span><span style="color:#d4d4d4">(</span><span style="color:#ce9178">&#x27;clean-client-build&#x27;</span><span style="color:#d4d4d4">, </span></div>
<div class="t m cl" style="left:970px;top:1027.6px"><span style="color:#9cdcfe">gulp</span><span style="color:#d4d4d4">.</span><span style="color:#dcdcaa">task</span><span style="color:#d4d4d4">(</span><span style="color:#ce9178">&#x27;compile-client-build&#x27;</span><span style="color:#d4d4d4">, [</span></div>
<div class="t m cl" style="left:970px;top:1063.6px"><span style="color:#9cdcfe">gulp</span><span style="color:#d4d4d4">.</span><span style="color:#dcdcaa">task</span><span style="color:#d4d4d4">(</span><span style="color:#ce9178">&#x27;watch-client-build&#x27;</span><span style="color:#d4d4d4">, [</span></div>
<div class="t m cl" style="left:834.0px;top:1099.6px;width:80px;text-align:right;color:#858585">25</div>
<div class="t m cl" style="left:834.0px;top:1135.6px;width:80px;text-align:right;color:#858585">26</div>
<div class="t m cl" style="left:970px;top:1135.6px"><span style="color:#6a9955">// Default</span></div>
<div class="t m cl" style="left:834.0px;top:1171.6px;width:80px;text-align:right;color:#858585">27</div>
<div class="t m cl" style="left:970px;top:1171.6px"><span style="color:#9cdcfe">gulp</span><span style="color:#d4d4d4">.</span><span style="color:#dcdcaa">task</span><span style="color:#d4d4d4">(</span><span style="color:#ce9178">&#x27;default&#x27;</span><span style="color:#d4d4d4">, [</span><span style="color:#ce9178">&#x27;compile&#x27;</span><span style="color:#d4d4d4">]);</span></div>
<div class="t m cl" style="left:834.0px;top:1207.6px;width:80px;text-align:right;color:#858585">28</div>
<div class="t m cl" style="left:834.0px;top:1243.6px;width:80px;text-align:right;color:#858585">29</div>
<div class="t m cl" style="left:970px;top:1243.6px"><span style="color:#6a9955">// All</span></div>
<div class="a" style="left:522px;top:84px;width:580px;height:1060px;background:#303030;border-radius:10px;box-shadow:0 4px 24px rgba(0,0,0,0.45);overflow:hidden">
<div class="t mi" style="left:63.8px;top:31px;color:#cccccc;letter-spacing:-0.091px">Open Preview</div>
<div class="t mi" style="left:63.8px;top:87px;color:#cccccc;letter-spacing:0.200px">Open to the Side</div>
<div class="t mi" style="left:63.8px;top:143px;color:#cccccc;letter-spacing:0.383px">Open With...</div>
<div class="t mi" style="left:63.8px;top:199px;color:#cccccc;letter-spacing:-0.148px">Reveal in Finder</div>
<div class="t mi" style="left:63.8px;top:255px;color:#cccccc;letter-spacing:0.370px">Open in Integrated Terminal</div>
<div class="a" style="left:0;top:306px;width:580px;height:2px;background:#626262"></div>
<div class="t mi" style="left:63.8px;top:333px;color:#cccccc;letter-spacing:0.272px">Select for Compare</div>
<div class="a" style="left:0;top:384px;width:580px;height:2px;background:#626262"></div>
<div class="t mi" style="left:63.8px;top:411px;color:#cccccc;letter-spacing:-0.052px">Find File References</div>
<div class="a" style="left:0;top:462px;width:580px;height:2px;background:#626262"></div>
<div class="t mi" style="left:63.8px;top:489px;color:#cccccc;letter-spacing:0.167px">Open Timeline</div>
<div class="a" style="left:0;top:540px;width:580px;height:2px;background:#626262"></div>
<div class="t mi" style="left:63.8px;top:567px;color:#cccccc;letter-spacing:-0.200px">Cut</div>
<div class="t mi" style="left:63.8px;top:623px;color:#cccccc;letter-spacing:-0.200px">Copy</div>
<div class="a" style="left:0;top:664px;width:580px;height:56px;background:#094771"></div>
<div class="t mi" style="left:63.8px;top:679px;color:#ffffff;letter-spacing:0.120px">Copy GitHub Permalink</div>
<div class="t mi" style="left:63.8px;top:735px;color:#cccccc;letter-spacing:0.070px">Copy GitHub Head Link</div>
<div class="a" style="left:0;top:786px;width:580px;height:2px;background:#626262"></div>
<div class="t mi" style="left:63.8px;top:813px;color:#cccccc;letter-spacing:0.021px">Copy Path</div>
<div class="t mi" style="left:63.8px;top:869px;color:#cccccc;letter-spacing:0.025px">Copy Relative Path</div>
<div class="a" style="left:0;top:920px;width:580px;height:2px;background:#626262"></div>
<div class="t mi" style="left:63.8px;top:947px;color:#cccccc;letter-spacing:-0.640px">Rename</div>
<div class="t mi" style="left:63.8px;top:1003px;color:#cccccc;letter-spacing:0.160px">Delete</div>
</div>
<svg style="left:0;top:0" width="1296" height="1264"><path d="M1016.00 120.80 L1007.10 129.70 H1012.20 V136.85 H1019.80 V129.70 H1024.90 Z" fill="none" stroke="#a6a6a6" stroke-width="2.50" stroke-linejoin="miter"/><path d="M1037.85 123.00 A2.75 2.75 0 1 0 1035.10 125.75 H1046.70 A2.75 2.75 0 1 0 1043.95 123.00 V134.50 A2.75 2.75 0 1 0 1046.70 131.75 H1035.10 A2.75 2.75 0 1 0 1037.85 134.50 Z" fill="none" stroke="#a6a6a6" stroke-width="2.30"/><path d="M1032.40 184.50 L1039.40 177.40 L1046.40 184.50" fill="none" stroke="#a6a6a6" stroke-width="2.40" stroke-linecap="round"/><path d="M1060.60 180.40 L1054.90 187.10 L1060.60 193.60 M1054.90 187.10 H1071.50 Q1073.80 187.10 1073.80 184.80 V179.80 Q1073.80 177.30 1071.50 177.30 H1066.30" fill="none" stroke="#a6a6a6" stroke-width="2.40" stroke-linecap="round" stroke-linejoin="round"/><path d="M1006.50 289.30 H1013.30 L1020.60 304.70 H1027.00 M1019.10 289.30 H1027.00" fill="none" stroke="#a6a6a6" stroke-width="2.60" stroke-linecap="round"/><path d="M1038.65 291.00 A2.75 2.75 0 1 0 1035.90 293.75 H1047.50 A2.75 2.75 0 1 0 1044.75 291.00 V302.50 A2.75 2.75 0 1 0 1047.50 299.75 H1035.90 A2.75 2.75 0 1 0 1038.65 302.50 Z" fill="none" stroke="#a6a6a6" stroke-width="2.30"/><path d="M1037.45 659.00 A2.75 2.75 0 1 0 1034.70 661.75 H1046.30 A2.75 2.75 0 1 0 1043.55 659.00 V670.50 A2.75 2.75 0 1 0 1046.30 667.75 H1034.70 A2.75 2.75 0 1 0 1037.45 670.50 Z" fill="none" stroke="#a6a6a6" stroke-width="2.30"/><path d="M1036.95 715.00 A2.75 2.75 0 1 0 1034.20 717.75 H1045.80 A2.75 2.75 0 1 0 1043.05 715.00 V726.50 A2.75 2.75 0 1 0 1045.80 723.75 H1034.20 A2.75 2.75 0 1 0 1036.95 726.50 Z" fill="none" stroke="#a6a6a6" stroke-width="2.30"/><path d="M1006.00 903.30 H1012.80 L1020.10 918.70 H1026.50 M1018.60 903.30 H1026.50" fill="none" stroke="#a6a6a6" stroke-width="2.60" stroke-linecap="round"/><path d="M1036.95 905.00 A2.75 2.75 0 1 0 1034.20 907.75 H1045.80 A2.75 2.75 0 1 0 1043.05 905.00 V916.50 A2.75 2.75 0 1 0 1045.80 913.75 H1034.20 A2.75 2.75 0 1 0 1036.95 916.50 Z" fill="none" stroke="#a6a6a6" stroke-width="2.30"/><path d="M979.00 959.30 H985.80 L993.10 974.70 H999.50 M991.60 959.30 H999.50" fill="none" stroke="#a6a6a6" stroke-width="2.60" stroke-linecap="round"/><path d="M1014.60 958.80 L1005.70 967.70 H1010.80 V974.85 H1018.40 V967.70 H1023.50 Z" fill="none" stroke="#a6a6a6" stroke-width="2.50" stroke-linejoin="miter"/><path d="M1036.95 961.00 A2.75 2.75 0 1 0 1034.20 963.75 H1045.80 A2.75 2.75 0 1 0 1043.05 961.00 V972.50 A2.75 2.75 0 1 0 1045.80 969.75 H1034.20 A2.75 2.75 0 1 0 1036.95 972.50 Z" fill="none" stroke="#a6a6a6" stroke-width="2.30"/><path d="M1060.50 1040.40 L1054.80 1047.10 L1060.50 1053.60 M1054.80 1047.10 H1071.40 Q1073.70 1047.10 1073.70 1044.80 V1039.80 Q1073.70 1037.30 1071.40 1037.30 H1066.20" fill="none" stroke="#a6a6a6" stroke-width="2.40" stroke-linecap="round" stroke-linejoin="round"/><path d="M1036.55 1095.00 A2.75 2.75 0 1 0 1033.80 1097.75 H1045.40 A2.75 2.75 0 1 0 1042.65 1095.00 V1106.50 A2.75 2.75 0 1 0 1045.40 1103.75 H1033.80 A2.75 2.75 0 1 0 1036.55 1106.50 Z" fill="none" stroke="#a6a6a6" stroke-width="2.30"/><path d="M1054.90 1100.40 L1062.10 1093.40 H1072.30 Q1074.30 1093.40 1074.30 1095.40 V1107.00 Q1074.30 1109.00 1072.30 1109.00 H1062.10 Z M1063.30 1097.40 L1069.90 1104.00 M1069.90 1097.40 L1063.30 1104.00" fill="none" stroke="#a6a6a6" stroke-width="2.40" stroke-linejoin="round"/></svg>
<div class="t mi" style="left:1049.0px;top:115px;width:40px;text-align:center;transform-origin:20px 0;transform:scaleX(0.86);color:#a6a6a6;-webkit-text-stroke:0.2px #a6a6a6">V</div>
<div class="t mi" style="left:1050.0px;top:283px;width:40px;text-align:center;transform-origin:20px 0;transform:scaleX(0.84);color:#a6a6a6;-webkit-text-stroke:0.2px #a6a6a6">R</div>
<div class="t mi" style="left:1049.0px;top:651px;width:40px;text-align:center;transform-origin:20px 0;transform:scaleX(0.90);color:#a6a6a6;-webkit-text-stroke:0.2px #a6a6a6">X</div>
<div class="t mi" style="left:1048.7px;top:707px;width:40px;text-align:center;transform-origin:20px 0;transform:scaleX(0.92);color:#a6a6a6;-webkit-text-stroke:0.2px #a6a6a6">C</div>
<div class="t mi" style="left:1048.7px;top:897px;width:40px;text-align:center;transform-origin:20px 0;transform:scaleX(0.92);color:#a6a6a6;-webkit-text-stroke:0.2px #a6a6a6">C</div>
<div class="t mi" style="left:1048.7px;top:953px;width:40px;text-align:center;transform-origin:20px 0;transform:scaleX(0.92);color:#a6a6a6;-webkit-text-stroke:0.2px #a6a6a6">C</div>
<svg style="left:915px;top:780px;filter:drop-shadow(0 1.5px 1.5px rgba(0,0,0,0.45))" width="45" height="45" viewBox="0 0 45 45"><path d="M15.7 7.2 C17.2 7.2 18.2 8.3 18.5 10.2 L19.8 18.4 L20.2 18.4 C20.2 16 21.3 14.9 23 14.9 C24.5 14.9 25.2 16 25.3 18.4 L25.6 18.4 C25.8 16.2 26.8 15.3 28.4 15.3 C30 15.3 30.9 16.5 31.1 18.7 L31.4 18.7 C31.7 17.6 32.7 17.1 33.9 17.2 C35.4 17.4 36.1 18.5 36 20.5 C35.8 24 35 27 33 30 C31.8 31.8 31.2 34 31 36.4 L28.3 36.4 L27 34.3 L25.6 36.4 L18.7 36.4 C17 33 13 28 9 23.5 C7.8 22 8 20 9.8 19.3 C11.5 18.6 13.5 19.6 15.5 22.5 L14.1 10.2 C14 8.3 14.5 7.2 15.7 7.2Z" fill="#fff" stroke="#000" stroke-width="1.6" stroke-linejoin="round"/><path d="M21.5 24.2 V31.7 M25.5 24.2 V31.7 M29.5 24.2 V31.7" stroke="#000" stroke-width="1.3"/></svg></body></html>
